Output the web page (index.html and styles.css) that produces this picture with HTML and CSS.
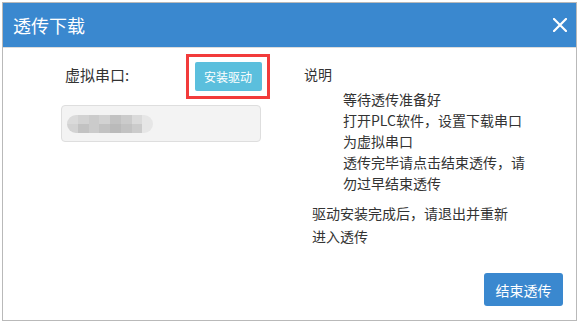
FILE: index.html
```html
<!DOCTYPE html>
<html lang="zh-CN">
<head>
    <meta charset="UTF-8">
    <meta name="viewport" content="width=device-width, initial-scale=1.0">
    <title>透传下载</title>
    <link rel="stylesheet" href="styles.css">
</head>
<body>
    <div class="dialog">
        <div class="dialog-head">
            <span class="dialog-title">透传下载</span>
            <button class="close" aria-label="关闭">
                <svg width="14" height="14" viewBox="0 0 14 14">
                    <path d="M1 1L13 13M13 1L1 13" stroke="#fff" stroke-width="2.2" stroke-linecap="square"/>
                </svg>
            </button>
        </div>
        <div class="dialog-body">
            <div class="col-left">
                <div class="port-row">
                    <span class="label">虚拟串口:</span>
                    <div class="mark">
                        <button class="btn btn-info">安装驱动</button>
                    </div>
                </div>
                <div class="port-input">
                    <div class="blur">
                        <i class="c1"></i><i class="c2"></i><i class="c3"></i><i class="c2"></i><i class="c4"></i><i class="c3"></i><i class="c1"></i><i class="c0"></i>
                        <i class="c2"></i><i class="c4"></i><i class="c3"></i><i class="c4"></i><i class="c5"></i><i class="c4"></i><i class="c3"></i><i class="c0"></i>
                    </div>
                </div>
            </div>
            <div class="col-right">
                <div class="note-title">说明</div>
                <ul class="note-list">
                    <li>等待透传准备好</li>
                    <li>打开PLC软件，设置下载串口为虚拟串口</li>
                    <li>透传完毕请点击结束透传，请勿过早结束透传</li>
                </ul>
                <p class="note-tip">驱动安装完成后，请退出并重新进入透传</p>
            </div>
        </div>
        <div class="dialog-foot">
            <button class="btn btn-primary">结束透传</button>
        </div>
    </div>
</body>
</html>
```

FILE: styles.css
```css
html, body {
    margin: 0;
    padding: 0;
}

body {
    background: #fff;
    font-family: "Noto Sans CJK SC", "Liberation Sans", sans-serif;
    color: #333;
    font-size: 14px;
}

.dialog {
    width: 573px;
    height: 317px;
    margin: 2px 0 0 2px;
    border: 1px solid #b9b9b9;
    display: flex;
    flex-direction: column;
    background: #fff;
}

.dialog-head {
    height: 44px;
    background: #3a88cf;
    border-bottom: 1px solid #dcdcdc;
    display: flex;
    align-items: center;
    justify-content: space-between;
    padding: 0 9px 0 10px;
    flex-shrink: 0;
}

.dialog-title {
    color: #fff;
    font-size: 18px;
    line-height: 24px;
}

.close {
    width: 14px;
    height: 14px;
    padding: 0;
    border: 0;
    background: none;
    display: flex;
    cursor: pointer;
}

.dialog-body {
    flex: 1;
    display: flex;
    padding-top: 6px;
}

.col-left {
    margin-left: 58px;
    width: 212px;
}

.port-row {
    display: flex;
    align-items: center;
    padding-left: 4px;
}

.label {
    width: 121px;
    font-size: 15px;
    line-height: 20px;
    margin-top: -3px;
}

.mark {
    width: 78px;
    height: 39px;
    border: 3px solid #f23b3b;
    display: flex;
    align-items: center;
    justify-content: center;
}

.btn {
    border: 0;
    color: #fff;
    font-family: inherit;
    cursor: pointer;
    padding: 0;
}

.btn-info {
    width: 67px;
    height: 29px;
    background: #5bbfdd;
    border-radius: 2px;
    font-size: 12px;
}

.port-input {
    box-sizing: border-box;
    width: 200px;
    height: 37px;
    margin-top: 6px;
    background: #f3f3f3;
    border: 1px solid #dedede;
    border-radius: 4px;
    display: flex;
    align-items: center;
    padding-left: 5px;
}

.blur {
    width: 86px;
    height: 18px;
    border-radius: 9px;
    overflow: hidden;
    display: grid;
    grid-template-columns: repeat(8, 1fr);
    filter: blur(0.6px);
}

.blur i { display: block; }
.blur .c0 { background: #e6e6e6; }
.blur .c1 { background: #dadada; }
.blur .c2 { background: #d2d2d2; }
.blur .c3 { background: #cbcbcb; }
.blur .c4 { background: #c2c2c2; }
.blur .c5 { background: #bababa; }

.col-right {
    margin-left: 31px;
    padding-top: 10px;
}

.note-title {
    line-height: 20px;
}

.note-list {
    list-style: none;
    margin: 5px 0 0;
    padding-left: 39px;
    width: 192px;
    line-height: 21px;
}

.note-tip {
    margin: 8px 0 0 8px;
    width: 204px;
    line-height: 23px;
}

.dialog-foot {
    display: flex;
    justify-content: flex-end;
    padding: 0 13px 14px 0;
}

.btn-primary {
    width: 79px;
    height: 33px;
    background: #3a88cf;
    border-radius: 3px;
    font-size: 14px;
}
```
